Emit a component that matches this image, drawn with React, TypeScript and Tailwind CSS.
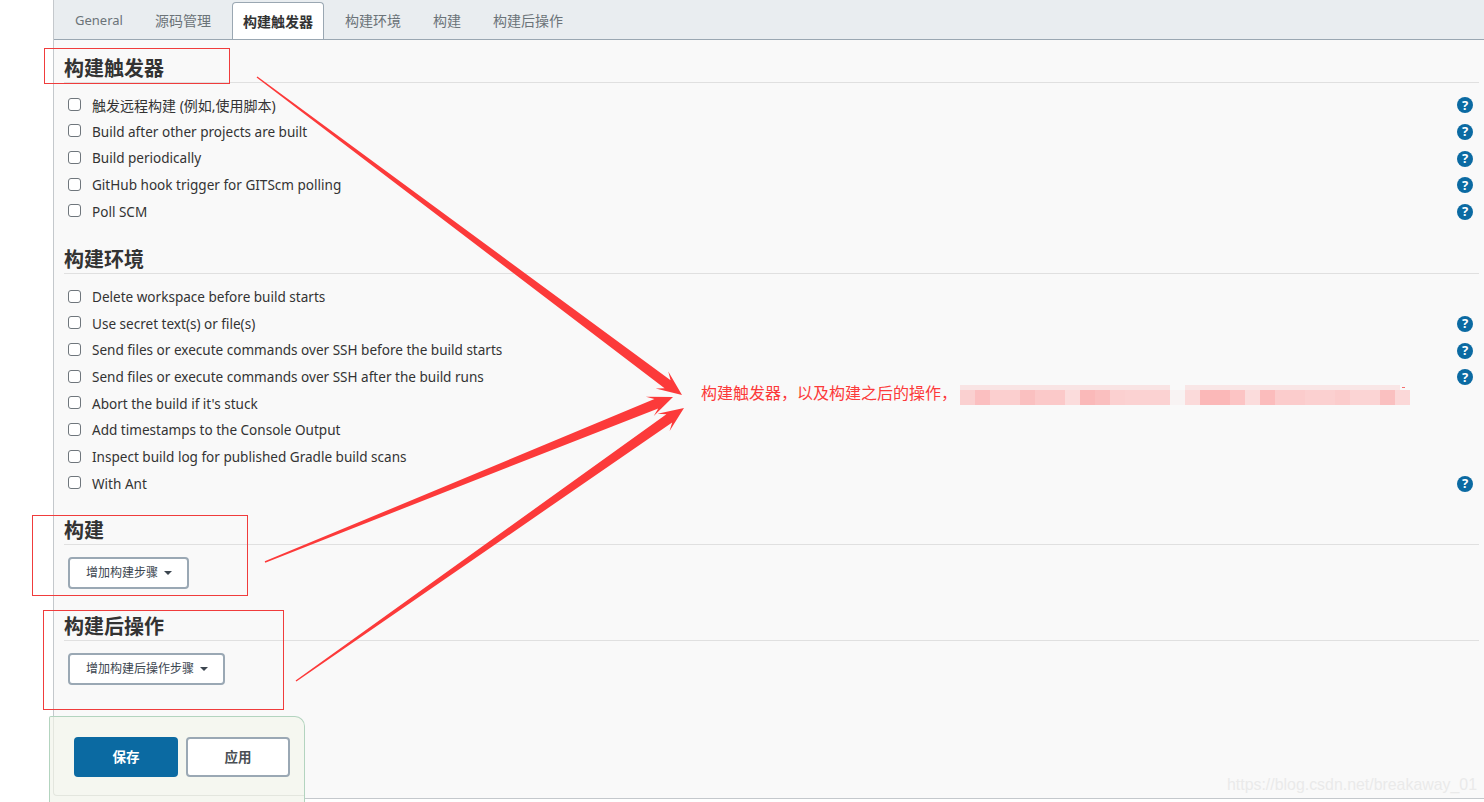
const tabs = ['General', '源码管理', '构建触发器', '构建环境', '构建', '构建后操作'];

const triggers = [
  { label: '触发远程构建 (例如,使用脚本)', help: true, cjk: true },
  { label: 'Build after other projects are built', help: true },
  { label: 'Build periodically', help: true },
  { label: 'GitHub hook trigger for GITScm polling', help: true },
  { label: 'Poll SCM', help: true },
];

const envs = [
  { label: 'Delete workspace before build starts', help: false },
  { label: 'Use secret text(s) or file(s)', help: true },
  { label: 'Send files or execute commands over SSH before the build starts', help: true },
  { label: 'Send files or execute commands over SSH after the build runs', help: true },
  { label: "Abort the build if it's stuck", help: false },
  { label: 'Add timestamps to the Console Output', help: false },
  { label: 'Inspect build log for published Gradle build scans', help: false },
  { label: 'With Ant', help: true },
];

// mosaic over the hidden part of the note, one colour per 15px cell
const mosaicA = ['#fad0d0', '#fbbfc0', '#fbcfcf', '#fbcfcf', '#fac0c0', '#fbc9c9', '#fbc9c9', '#fbdcdc', '#fab9b9', '#fabfbf', '#fbd0d0', '#fbd2d2', '#fbd2d2', '#fbd2d2'];
const mosaicB = ['#fbdada', '#fbb8b8', '#fbb8b8', '#fcc4c4', '#fbdcdc', '#fbbcbc', '#fbcccc', '#fbcccc', '#fbd0d0', '#fbd0d0', '#fbcccc', '#fbd4d4', '#fbd4d4', '#fac0c0', '#fbd8d8'];

function arrowPoints(x1: number, y1: number, x2: number, y2: number) {
  const len = Math.hypot(x2 - x1, y2 - y1);
  const ux = (x2 - x1) / len;
  const uy = (y2 - y1) / len;
  const nx = -uy;
  const ny = ux;
  const at = (back: number, side: number) =>
    `${x2 - ux * back + nx * side},${y2 - uy * back + ny * side}`;
  return [
    `${x1 + nx * 0.7},${y1 + ny * 0.7}`,
    at(18, 5),
    at(25, 10.5),
    at(0, 0),
    at(25, -10.5),
    at(18, -5),
    `${x1 - nx * 0.7},${y1 - ny * 0.7}`,
  ].join(' ');
}

function Help() {
  return (
    <span className="flex h-4 w-4 items-center justify-center rounded-full bg-[#0b6aa2] text-[13px] leading-none font-bold text-white">
      ?
    </span>
  );
}

function Row({ label, help, cjk }: { label: string; help: boolean; cjk?: boolean }) {
  return (
    <div className="flex h-[26.67px] items-center pr-[6px] pl-1">
      <span className="mb-[2px] h-[13px] w-[13px] rounded-[3px] border border-[#6f767c] bg-white" />
      <span className={`ml-[11px] flex-1 text-[#333] ${cjk ? 'text-[14px]' : 'text-[13.56px]'}`}>{label}</span>
      {help && <Help />}
    </div>
  );
}

function Heading({ title, height }: { title: string; height: string }) {
  return (
    <div className={`flex items-end border-b border-[#e0e0e0] ${height}`}>
      <h2 className="text-[20px] leading-[26px] font-bold text-[#333]">{title}</h2>
    </div>
  );
}

function DropButton({ label }: { label: string }) {
  return (
    <button className="ml-1 flex h-8 items-center rounded-[4px] border-2 border-[#9aa8b4] bg-white pt-px pr-[15px] pl-4 text-[12px] text-[#3c4650]">
      {label}
      <span className="ml-[6px] h-0 w-0 border-x-[4px] border-t-[4px] border-x-transparent border-t-[#3c4650]" />
    </button>
  );
}

export default function App() {
  return (
    <div className="relative flex h-[802px] overflow-hidden bg-white font-['Noto_Sans','Noto_Sans_CJK_SC',sans-serif]">
      <div className="w-[53px] shrink-0" />

      <main className="h-[799px] flex-1 border-b border-l border-[#c4c8cc] bg-[#f9f9f9]">
        <nav className="flex h-10 gap-[10px] border-b border-[#9aa7b2] bg-[#e9edf0] pt-[2px] pl-[10px]">
          {tabs.map((tab) =>
            tab === '构建触发器' ? (
              <span
                key={tab}
                className="flex h-[37px] items-center rounded-t-[4px] border border-b-0 border-[#9aa7b2] bg-white px-[10px] text-[14px] font-bold text-[#333]"
              >
                {tab}
              </span>
            ) : (
              <span
                key={tab}
                className={`flex h-[37px] items-center border border-transparent px-[10px] text-[#6b7378] ${tab === 'General' ? 'text-[13px]' : 'text-[14px]'}`}
              >
                {tab}
              </span>
            )
          )}
        </nav>

        <div className="pr-[5px] pl-[10px]">
          <Heading title="构建触发器" height="h-[43px]" />
          <div className="mt-[9px]">
            {triggers.map((item) => (
              <Row key={item.label} {...item} />
            ))}
          </div>

          <Heading title="构建环境" height="h-[48.65px]" />
          <div className="mt-[10px]">
            {envs.map((item) => (
              <Row key={item.label} {...item} />
            ))}
          </div>

          <Heading title="构建" height="h-[47.64px]" />
          <div className="mt-3">
            <DropButton label="增加构建步骤" />
          </div>

          <Heading title="构建后操作" height="h-[52px]" />
          <div className="mt-3">
            <DropButton label="增加构建后操作步骤" />
          </div>
        </div>

        <footer className="relative z-10 mt-[31px] -ml-[5px] flex h-[86px] w-[256px] items-start gap-2 rounded-t-[2px] rounded-tr-[10px] border border-b-0 border-[#b3d4bf] bg-[#f5f7f0] pt-5 pl-6">
          <div className="absolute top-0 right-0 bottom-[6px] left-[3px] rounded-bl-[4px] border-b border-l border-[#e3e6de]" />
          <button className="relative h-10 w-[104px] rounded-[4px] bg-[#0b6aa2] text-[13.5px] font-bold text-white">保存</button>
          <button className="relative h-10 w-[104px] rounded-[4px] border-2 border-[#9aa8b4] bg-white text-[13.5px] font-bold text-[#4a4f54]">应用</button>
        </footer>
      </main>

      {/* annotations drawn on top of the screenshot */}
      <svg className="pointer-events-none absolute inset-0 z-20 h-full w-full" viewBox="0 0 1484 802">
        <g fill="#fc3a3a">
          <polygon points={arrowPoints(257, 77, 682, 395)} />
          <polygon points={arrowPoints(265, 562, 673, 397)} />
          <polygon points={arrowPoints(296, 681, 684, 408)} />
        </g>
      </svg>
      <div className="absolute top-[48px] left-[44px] z-20 h-[36px] w-[186px] border border-[#f03c3c]" />
      <div className="absolute top-[515px] left-[32px] z-20 h-[81px] w-[216px] border border-[#f03c3c]" />
      <div className="absolute top-[610px] left-[43px] z-20 h-[100px] w-[241px] border border-[#f03c3c]" />

      <span className="absolute top-[382px] left-[701px] z-20 text-[16px] leading-[22px] text-[#fc3a3a]">
        构建触发器，以及构建之后的操作，
      </span>
      <div className="absolute top-[385px] left-[960px] z-20 flex">
        <div>
          <div className="h-[5px] w-[210px] bg-[#f9e4e4]" />
          <div className="flex">
            {mosaicA.map((color, i) => (
              <span key={i} className="h-[15px] w-[15px]" style={{ backgroundColor: color }} />
            ))}
          </div>
        </div>
        <span className="mt-[5px] h-[15px] w-[15px] bg-[#f8f3f3]" />
        <div>
          <div className="h-[5px] w-[215px] bg-[#f9e6e6]" />
          <div className="flex">
            {mosaicB.map((color, i) => (
              <span key={i} className="h-[15px] w-[15px]" style={{ backgroundColor: color }} />
            ))}
          </div>
        </div>
      </div>
      <span className="absolute top-[387px] left-[1402px] z-20 h-px w-[3px] bg-[#f47070]" />

      <span className="absolute top-[773px] left-[1227px] z-20 font-['Liberation_Sans',sans-serif] text-[15.9px] text-[#eaeaea]">
        https://blog.csdn.net/breakaway_01
      </span>
    </div>
  );
}
